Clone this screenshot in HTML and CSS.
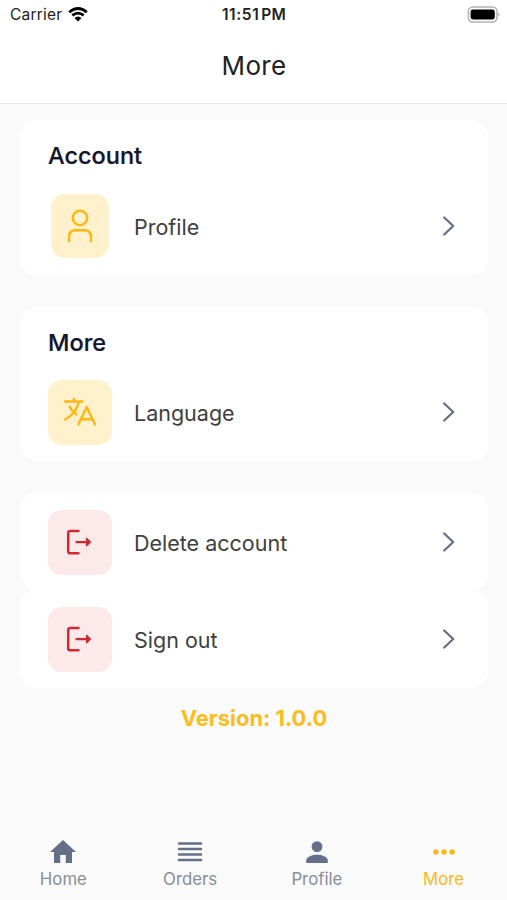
FILE: index.html
```html
<!DOCTYPE html>
<html lang="en">
<head>
<meta charset="utf-8">
<title>More</title>
<link rel="stylesheet" href="styles.css">
</head>
<body>
<svg class="defs" aria-hidden="true">
  <symbol id="chevron" viewBox="0 0 14 20"><path d="M2.2 1.5 11.2 10 2.2 18.5" fill="none" stroke="currentColor" stroke-width="2.3" stroke-linecap="round" stroke-linejoin="round"/></symbol>
  <symbol id="exit" viewBox="0 0 28 28"><path d="M13.5 2.9H5.5Q3.2 2.9 3.2 5V23.2Q3.2 25.3 5.5 25.3H13.5" fill="none" stroke="currentColor" stroke-width="2.5" stroke-linecap="round"/><path d="M11.5 14.1H22" fill="none" stroke="currentColor" stroke-width="2.3" stroke-linecap="round"/><path d="M21.5 10.3 25.6 14.1 21.5 17.9Z" fill="currentColor" stroke="currentColor" stroke-width="1.2" stroke-linejoin="round"/></symbol>
</svg>
<div class="screen">
  <header class="header">
    <div class="status">
      <div class="carrier"><span>Carrier</span>
        <svg class="wifi" viewBox="0 0 20 15"><path d="M1.2 5.2Q10-2.2 18.8 5.2M4.3 8.4Q10 3.8 15.7 8.4" fill="none" stroke="#000" stroke-width="2.7"/><path d="M6.5 11Q10 8 13.5 11L10 14.6Z"/></svg>
      </div>
      <div class="time">11:51<span>PM</span></div>
      <svg class="battery" viewBox="0 0 34 18"><rect x="2.4" y="1" width="28.6" height="15" rx="4.5" fill="#fff" stroke="#b5b5b5" stroke-width="1.6"/><rect x="4.6" y="3.5" width="24.2" height="10" rx="2.4"/><path d="M32.4 6.3Q34.6 8.5 32.4 10.7Z" fill="#aaa"/></svg>
    </div>
    <h1>More</h1>
  </header>
  <main class="content">
    <section class="card">
      <h2>Account</h2>
      <div class="row">
        <div class="tile narrow"><svg viewBox="0 0 36 36"><g fill="none" stroke="currentColor" stroke-width="2.4" stroke-linecap="round"><circle cx="18" cy="10" r="7.2"/><path d="M7 33.2V29Q7 22.2 13.5 22.2H22.5Q29 22.2 29 29V33.2"/></g></svg></div>
        <span class="label">Profile</span><svg class="chevron"><use href="#chevron"/></svg>
      </div>
    </section>
    <section class="card">
      <h2>More</h2>
      <div class="row">
        <div class="tile"><svg viewBox="0 0 36 36"><g fill="none" stroke="currentColor" stroke-width="2.4" stroke-linecap="round" stroke-linejoin="round"><path d="M3 7.5H20.3M12 5V7.5M17 7.5Q14.5 19 3.2 25.5M7.5 12.5Q9.5 17 14.5 20.2M16.3 30.5 24.7 13 33 30.5M19.2 25.2H30.2"/></g></svg></div>
        <span class="label">Language</span><svg class="chevron"><use href="#chevron"/></svg>
      </div>
    </section>
    <section class="actions">
      <div class="card action">
        <div class="row"><div class="tile red"><svg><use href="#exit"/></svg></div><span class="label">Delete account</span><svg class="chevron"><use href="#chevron"/></svg></div>
      </div>
      <div class="card action">
        <div class="row"><div class="tile red"><svg><use href="#exit"/></svg></div><span class="label">Sign out</span><svg class="chevron"><use href="#chevron"/></svg></div>
      </div>
    </section>
    <p class="version">Version: 1.0.0</p>
  </main>
  <nav class="tabs">
    <a class="tab"><svg viewBox="0 0 28 26"><path d="M14 1 27 13H23V24H16.8V16H11.2V24H5V13H1Z" fill="currentColor"/></svg><span>Home</span></a>
    <a class="tab"><svg viewBox="0 0 28 26"><path d="M3 4.5H25M3 10H25M3 15.5H25M3 21H25" stroke="currentColor" stroke-width="2.5" stroke-linecap="round"/></svg><span>Orders</span></a>
    <a class="tab"><svg viewBox="0 0 28 26"><circle cx="14" cy="7.6" r="5.4" fill="currentColor"/><path d="M3.2 24V21.5C3.2 17.5 9.5 15.7 14 15.7S24.8 17.5 24.8 21.5V24Z" fill="currentColor"/></svg><span>Profile</span></a>
    <a class="tab active"><svg viewBox="0 0 28 26"><g fill="currentColor"><circle cx="5.9" cy="13" r="2.7"/><circle cx="14" cy="13" r="2.7"/><circle cx="22.1" cy="13" r="2.7"/></g></svg><span>More</span></a>
  </nav>
</div>
</body>
</html>
```
FILE: styles.css
```css
* { box-sizing: border-box; }
body { margin: 0; background: #fafafa; font-family: Inter, "Liberation Sans", sans-serif; }
.defs { position: absolute; width: 0; height: 0; }
svg { display: block; flex: none; }
h1, h2, p { margin: 0; }
.screen { height: 900px; display: flex; flex-direction: column; }
.header { height: 104px; background: #fff; border-bottom: 1px solid #e8e8e8; }
.status { height: 30px; padding: 0 7px 1px 10px; display: grid; grid-template-columns: 1fr auto 1fr; align-items: center; color: #222; }
.carrier { display: flex; align-items: center; gap: 6px; font-size: 15.5px; letter-spacing: .2px; }
.wifi { width: 20px; height: 15px; }
.time { font-size: 15.5px; font-weight: 600; letter-spacing: .6px; margin-right: 2px; }
.time span { margin-left: 2px; letter-spacing: .2px; }
.battery { width: 34px; height: 18px; justify-self: end; }
h1 { margin-top: 18px; padding-left: 1px; text-align: center; font-size: 26px; line-height: 36px; font-weight: 400; letter-spacing: .3px; color: #222; }
.content { flex: 1; padding: 16px 19px 0 20px; display: flex; flex-direction: column; gap: 32px; }
.card { height: 154.5px; padding: 20px 32px 0 28px; background: #fff; border-radius: 16px; }
h2 { height: 32px; line-height: 32px; font-size: 23.5px; font-weight: 500; color: #12152b; -webkit-text-stroke: .2px #12152b; }
.row { display: flex; align-items: center; margin-top: 21.5px; height: 64.5px; }
.tile { width: 64px; height: 64.5px; border-radius: 14px; background: #fff1cc; color: #fdb813; display: grid; place-items: center; flex: none; }
.tile.narrow { width: 58px; margin: 0 3px; }
.tile svg { width: 36px; height: 36px; }
.tile.red { background: #fce9ea; color: #cf2a33; }
.tile.red svg { width: 28px; height: 28px; margin-right: 2px; }
.label { flex: 1; margin-left: 22px; padding-top: 2px; font-size: 21.5px; line-height: 28px; color: #3e3e3e; }
.chevron { width: 14px; height: 20px; color: #6a6d84; }
.action { height: 97px; padding-top: 17px; }
.action + .action { height: 98px; }
.action .row { margin-top: 0; }
.version { margin-top: -17.5px; text-align: center; font-size: 21.9px; line-height: 30px; font-weight: 700; color: #fdbc1c; }
.tabs { height: 70px; display: grid; grid-template-columns: repeat(4, 1fr); flex: none; }
.tab { display: flex; flex-direction: column; align-items: center; padding-top: 9px; color: #646f88; }
.tab svg { width: 28px; height: 26px; }
.tab span { margin-top: 3px; font-size: 16.8px; line-height: 22px; color: #898d98; }
.tab.active, .tab.active span { color: #fdb813; }
```
